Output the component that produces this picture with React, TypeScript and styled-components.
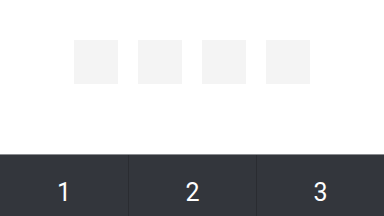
import React from 'react';
import styled, { createGlobalStyle } from 'styled-components';

const GlobalStyle = createGlobalStyle`
  html, body {
    margin: 0;
    padding: 0;
    background: #ffffff;
    font-family: Roboto, "Liberation Sans", sans-serif;
  }
`;

const Page = styled.div`
  width: 384px;
  height: 216px;
  display: flex;
  flex-direction: column;
  overflow: hidden;
`;

const Slots = styled.div`
  flex: 1;
  display: flex;
  justify-content: center;
  gap: 20px;
  padding-top: 40px;
`;

const Slot = styled.div`
  width: 44px;
  height: 44px;
  background: #f4f4f4;
`;

const Keypad = styled.div`
  height: 61px;
  display: grid;
  grid-template-columns: repeat(3, 1fr);
  background: #33363c;
  border-top: 1px solid #8a8c90;
`;

const Key = styled.button`
  border: none;
  border-left: 1px solid #2a2c31;
  background: transparent;
  color: #ffffff;
  font-family: Roboto, "Liberation Sans", sans-serif;
  font-size: 25px;
  line-height: 28px;
  padding: 24px 0 0;
  align-self: stretch;
  display: flex;
  justify-content: center;
  align-items: flex-start;
  &:first-child {
    border-left: none;
  }
`;

export default function App() {
  return (
    <Page>
      <GlobalStyle />
      <Slots>
        {[0, 1, 2, 3].map((i) => (
          <Slot key={i} />
        ))}
      </Slots>
      <Keypad>
        {['1', '2', '3'].map((k) => (
          <Key key={k}>{k}</Key>
        ))}
      </Keypad>
    </Page>
  );
}
